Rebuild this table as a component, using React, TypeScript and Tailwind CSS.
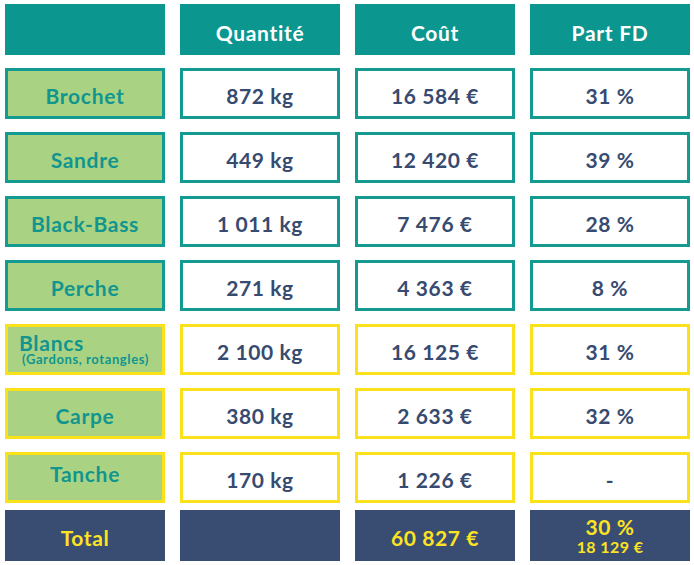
import React from "react";

const TEAL_BORDER = "border-[#149a91]";
const YELLOW_BORDER = "border-[#fbe11c]";

type Row = { name: string; sub?: string; qty: string; cost: string; part: string; yellow?: boolean };

const rows: Row[] = [
  { name: "Brochet", qty: "872 kg", cost: "16 584 €", part: "31 %" },
  { name: "Sandre", qty: "449 kg", cost: "12 420 €", part: "39 %" },
  { name: "Black-Bass", qty: "1 011 kg", cost: "7 476 €", part: "28 %" },
  { name: "Perche", qty: "271 kg", cost: "4 363 €", part: "8 %" },
  { name: "Blancs", sub: "(Gardons, rotangles)", qty: "2 100 kg", cost: "16 125 €", part: "31 %", yellow: true },
  { name: "Carpe", qty: "380 kg", cost: "2 633 €", part: "32 %", yellow: true },
  { name: "Tanche", qty: "170 kg", cost: "1 226 €", part: "-", yellow: true },
];

export default function App() {
  return (
    <div
      className="w-[694px] h-[565px] bg-white pt-[4px] pl-[5px]"
      style={{ fontFamily: "Lato, 'Open Sans', sans-serif" }}
    >
      <div className="flex flex-col gap-[13px]">
        <div className="flex gap-[15px] h-[51px]">
          <div className="w-[160px] bg-[#0b968f]" />
          {["Quantité", "Coût", "Part FD"].map((h) => (
            <div
              key={h}
              className="w-[160px] bg-[#0b968f] flex items-center justify-center pt-[6px] text-white text-[21px] tracking-[0.7px] font-bold"
            >
              {h}
            </div>
          ))}
        </div>
        {rows.map((r) => {
          const b = r.yellow ? YELLOW_BORDER : TEAL_BORDER;
          return (
            <div key={r.name} className="flex gap-[15px] h-[51px]">
              <div
                className={`w-[160px] border-[3px] ${b} bg-[#a9d382] text-[#11958f] font-bold flex flex-col tracking-[0.7px] ${
                  r.sub ? "items-start justify-center pl-[11px]" : r.name === "Tanche" ? "items-center justify-start pt-[9px]" : "items-center justify-center pt-[4px]"
                }`}
              >
                <span className={`text-[21px] ${r.sub ? "leading-[17px]" : "leading-[19px]"}`}>{r.name}</span>
                {r.sub && <span className="text-[13px] leading-[12px] mt-[2px] ml-[3px] tracking-[0.6px]">{r.sub}</span>}
              </div>
              {[r.qty, r.cost, r.part].map((v, i) => (
                <div
                  key={i}
                  className={`w-[160px] border-[3px] ${b} bg-white text-[#374a70] font-bold text-[21px] tracking-[0.6px] flex items-center justify-center pt-[5px]`}
                >
                  {v}
                </div>
              ))}
            </div>
          );
        })}
        <div className="flex gap-[15px] h-[51px] -mt-[6px]">
          <div className="w-[160px] bg-[#394c72] text-[#fde321] text-[21px] tracking-[0.6px] font-bold flex items-center justify-center pt-[4px]">
            Total
          </div>
          <div className="w-[160px] bg-[#394c72]" />
          <div className="w-[160px] bg-[#394c72] text-[#fde321] text-[21px] tracking-[0.6px] font-bold flex items-center justify-center pt-[4px]">
            60 827 €
          </div>
          <div className="w-[160px] bg-[#394c72] text-[#fde321] font-bold flex flex-col items-center justify-center">
            <span className="text-[21px] leading-[22px] tracking-[0.6px]">30 %</span>
            <span className="text-[16px] leading-[18px] tracking-[0.4px]">18 129 €</span>
          </div>
        </div>
      </div>
    </div>
  );
}
